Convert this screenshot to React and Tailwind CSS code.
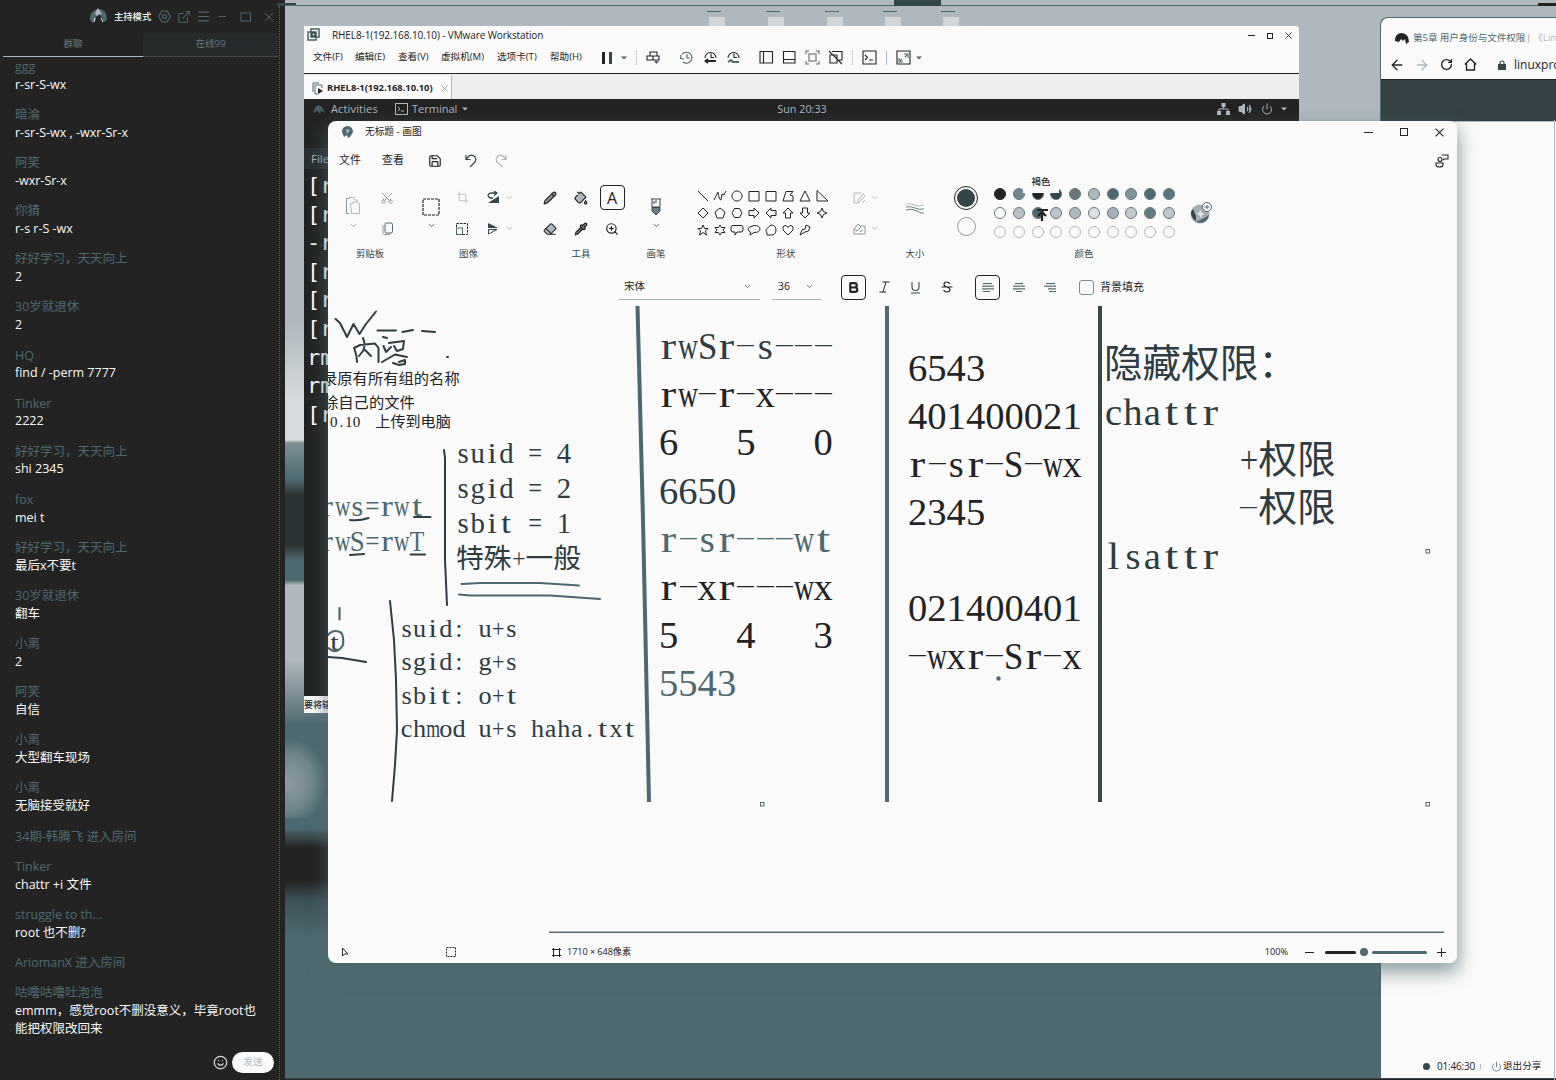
import React from "react";
import {
  ExternalLink, Menu, Minus, X, Smile, Save, Scissors,
  Crop, Pencil, PaintBucket, Eraser, Pipette, ZoomIn, ChevronDown, ArrowLeft, ArrowRight, RotateCw,
  Power, Volume2, Bold,
} from "lucide-react";

const UI = "font-['Open_Sans','Noto_Sans_CJK_SC',sans-serif]";

const chat = [
  ["ggg", "r-sr-S-wx"],
  ["暗淪", "r-sr-S-wx , -wxr-Sr-x"],
  ["阿笑", "-wxr-Sr-x"],
  ["你猜", "r-s r-S -wx"],
  ["好好学习，天天向上", "2"],
  ["30岁就退休", "2"],
  ["HQ", "find / -perm 7777"],
  ["Tinker", "2222"],
  ["好好学习，天天向上", "shi 2345"],
  ["fox", "mei t"],
  ["好好学习，天天向上", "最后x不要t"],
  ["30岁就退休", "翻车"],
  ["小离", "2"],
  ["阿笑", "自信"],
  ["小离", "大型翻车现场"],
  ["小离", "无脑接受就好"],
  ["34期-韩腾飞 进入房间", null],
  ["Tinker", "chattr +i 文件"],
  ["struggle to th...", "root 也不删?"],
  ["AriomanX 进入房间", null],
  ["咕噜咕噜吐泡泡", "emmm，感觉root不删没意义，毕竟root也能把权限改回来"],
];

function Sidebar() {
  return (
    <aside className={`relative flex h-full w-[285px] shrink-0 flex-col bg-[#232323] ${UI}`}>
      <div className="flex h-[33px] shrink-0 items-center pl-[89px] text-[#4d696f]">
        <svg className="shrink-0" width="19" height="17" viewBox="0 0 19 17">
          <path d="M1 12Q0 3 9 1Q18 1 18 12L15 14L13 10L11 7L8 8L6 12L4 15Z" fill="#4d696f" />
          <path d="M7 3L9 0L11 3L13 7L10 6L8 8L6 6Z" fill="#afb8be" />
          <path d="M5 14L6 10M14 14L12 10" stroke="#fafafa" strokeWidth="1" />
        </svg>
        <span className="ml-[6px] w-[38px] shrink-0 whitespace-nowrap text-[9.3px] font-medium text-[#fafafa]">主持模式</span>
        <svg className="ml-[6px] shrink-0" width="13" height="13" viewBox="0 0 13 13" fill="none" stroke="currentColor" strokeWidth="1.200">
          <path d="M4 1H9L12.3 6.5L9 12H4L.7 6.5Z" /><circle cx="6.5" cy="6.5" r="2" />
        </svg>
        <ExternalLink className="ml-[6px] shrink-0" size={14} strokeWidth={1.8} />
        <Menu className="ml-[5px] shrink-0" size={15} strokeWidth={1.7} />
        <Minus className="ml-[6px] shrink-0" size={11} strokeWidth={2} />
        <svg className="ml-[12px] shrink-0" width="12" height="10" viewBox="0 0 12 10" fill="none" stroke="currentColor"><rect x="1" y="1" width="9.5" height="8" /></svg>
        <X className="ml-[10px] shrink-0" size={14} strokeWidth={1.6} />
      </div>
      <div className="ml-[3px] flex h-[24px] w-[275px] shrink-0 text-[9.6px] text-[#62797f]">
        <div className="flex w-[140px] items-center justify-center border-b border-[#afb8be]">群聊</div>
        <div className="flex flex-1 items-center justify-center border-b border-dotted border-[#4d696f] bg-[#272a2b]">在线99</div>
      </div>
      <div className="ml-[15px] mt-px w-[245px] shrink-0 text-[12.5px] leading-[17.7px]">
        {chat.map(([name, text], i) => (
          <div key={i} className="mb-[12.7px] last:mb-0">
            <div className="whitespace-nowrap text-[#4d696f]">{name}</div>
            {text && <div className="text-[#fafafa]">{text}</div>}
          </div>
        ))}
      </div>
      <div className="mt-auto flex h-[35px] shrink-0 items-center justify-end pr-[11px]">
        <Smile size={15} strokeWidth={2} className="text-[#d5dadc]" />
        <div className="ml-[4px] flex h-[21px] w-[42px] items-center justify-center rounded-full bg-[#fafafa] text-[9.5px] text-[#afb8be]">发送</div>
      </div>
      <div className="absolute bottom-0 right-[5px] top-[6px] border-r border-dotted border-[#4d696f]" />
    </aside>
  );
}

const Caret = ({ c = "#232323" }) => (
  <svg width="6" height="4" viewBox="0 0 6 4"><path d="M0 .5H6L3 3.5Z" fill={c} /></svg>
);

function WinButtons({ size, gap }) {
  return (
    <div className="flex items-center text-[#232323]" style={{ gap }}>
      <div className="h-px bg-[#232323]" style={{ width: size }} />
      <div className="border border-[#232323]" style={{ width: size - 1, height: size - 1 }} />
      <svg width={size} height={size} viewBox="0 0 8 8" stroke="currentColor"><path d="M.5.5L7.5 7.5M7.5.5L.5 7.5" /></svg>
    </div>
  );
}

const VIcon = ({ children, className = "" }) => (
  <svg className={`shrink-0 ${className}`} width="15" height="15" viewBox="0 0 15 15" fill="none" stroke="#232323" strokeWidth="1.1">{children}</svg>
);

function VMware() {
  const lines = ["[r", "[r", "-r", "[r", "[r", "[r", "rm", "rm", "[r"];
  return (
    <section className={`absolute left-[304px] top-[26px] flex h-[687px] w-[995px] flex-col rounded-tr bg-[#fafafa] ${UI}`}>
      <div className="flex h-[19px] items-center pl-[3px] pr-[7px] text-[10px] text-[#232323]">
        <VIcon><rect x="1" y="4" width="8" height="8" stroke="#4d696f" strokeWidth="1.6" /><rect x="4" y="1" width="8" height="8" stroke="#4d696f" strokeWidth="1.6" /><rect x="5" y="5" width="3" height="3" /></VIcon>
        <span className="ml-[10px] w-[211px] whitespace-nowrap tracking-[-0.1px]">RHEL8-1(192.168.10.10) - VMware Workstation</span>
        <div className="ml-auto"><WinButtons size={7} gap={12} /></div>
      </div>
      <div className="flex h-[29px] items-center border-b border-[#232323] pb-[3px] pl-[9px] text-[9.6px] text-[#232323]">
        <div className="flex whitespace-nowrap">
          <span className="w-[42px]">文件(F)</span><span className="w-[43px]">编辑(E)</span><span className="w-[43px]">查看(V)</span>
          <span className="w-[56px]">虚拟机(M)</span><span className="w-[53px]">选项卡(T)</span><span className="w-[52px]">帮助(H)</span>
        </div>
        <div className="flex w-[10px] justify-between"><i className="h-[12px] w-[3px] bg-[#232323]" /><i className="h-[12px] w-[3px] bg-[#33464a]" /></div>
        <div className="ml-[9px]"><Caret c="#4d696f" /></div>
        <i className="ml-[9px] h-[14px] border-l border-dotted border-[#afb8be]" />
        <VIcon className="ml-[9px]"><path d="M4 2H11V6H4ZM1 6H7V10H1ZM7 6H13V10H7" /><path d="M8 11H13L10.500 14Z" fill="#4d696f" stroke="none" /></VIcon>
        <VIcon className="ml-[18px]"><path d="M3 4.500A5.500 5.500 0 1 1 4 12M2 5L1.500 8.500L5 9M8 4V8H11" stroke="#4d696f" /></VIcon>
        <VIcon className="ml-[9px]"><path d="M2 8A5.500 5.500 0 1 1 13 8M8 3.500V7.500H11" /><path d="M2 11H13M5 9L2.500 11L5 13" strokeWidth="1.800" /></VIcon>
        <VIcon className="ml-[8px]"><path d="M2 8A5.500 5.500 0 1 1 13 8M8 3.500V7.500H11" /><path d="M2 12L5 10L7 12H13" stroke="#4d696f" strokeWidth="2" /></VIcon>
        <VIcon className="ml-[18px]"><path d="M1 1.500H13.500V13H1ZM4.500 1.500V13" /></VIcon>
        <VIcon className="ml-[8px]"><path d="M1.500 1.500H13V13H1.500ZM1.500 9.500H13" /></VIcon>
        <VIcon className="ml-[8px]"><path d="M1 4V1H4M11 1H14V4M14 11V14H11M4 14H1V11" stroke="#4d696f" /><rect x="4" y="4" width="7" height="7" stroke="#8b979d" strokeWidth="1.600" /></VIcon>
        <VIcon className="ml-[8px]"><path d="M4 1.500H14V10H11M2 4V13H9V5H3M1 1L14 14" /></VIcon>
        <i className="ml-[9px] h-[14px] border-l border-dotted border-[#afb8be]" />
        <VIcon className="ml-[9px]"><path d="M1 1H14V14H1ZM3 5L5.500 7.500L3 10M7 10H11" /></VIcon>
        <i className="ml-[9px] h-[14px] border-l border-[#afb8be]" />
        <VIcon className="ml-[9px]"><path d="M1 1H14V14H1Z" /><path d="M3 8V12H7M8 4H12V8M4 11L6 9M11 5L9 7" stroke="#4d696f" /></VIcon>
        <div className="ml-[5px]"><Caret c="#4d696f" /></div>
      </div>
      <div className="flex h-[25px] bg-[#ebedee] pt-[2px]">
        <div className="flex w-[148px] items-center border-r border-[#afb8be] bg-[#fafafa] pl-[8px] pt-px text-[9.4px] font-bold text-[#232323]">
          <svg width="12" height="13" viewBox="0 0 12 13" fill="none" stroke="#4d696f"><path d="M1 10V1H7M3 12V3H10V6M3 12H6" /><path d="M6 6L11 9L6 12Z" fill="#232323" stroke="none" /></svg>
          <span className="ml-[3px] w-[106px] whitespace-nowrap">RHEL8-1(192.168.10.10)</span>
          <X className="ml-[6px] shrink-0" size={11} strokeWidth={1.800} color="#8b979d" />
        </div>
      </div>
      <div className="flex h-[597px] flex-col bg-[#232323] text-[#d5dadc]">
        <div className="grid h-[20px] grid-cols-3 items-center pl-[9px] pr-[12px] text-[11px]">
          <div className="flex items-center">
            <svg width="12" height="9" viewBox="0 0 12 9" fill="#4d696f"><path d="M3 1L6 0L9 2L12 8L8 6L7 9L4 6L0 8Z" opacity=".8" /></svg>
            <span className="ml-[6px] w-[50px] tracking-[0.15px] text-[#afb8be]">Activities</span>
            <svg className="ml-[14px]" width="13" height="12" viewBox="0 0 13 12" fill="none" stroke="#afb8be"><rect x=".5" y=".5" width="12" height="11" /><path d="M3 4L5 6L3 8M6 8H9" /></svg>
            <span className="ml-[4px] w-[47px] text-[#afb8be]">Terminal</span>
            <span className="ml-[3px]"><Caret c="#afb8be" /></span>
          </div>
          <div className="pl-[4px] text-center text-[10.8px] text-[#afb8be]">Sun 20:33</div>
          <div className="flex items-center justify-end text-[#afb8be]">
            <svg width="13" height="12" viewBox="0 0 13 12" fill="#afb8be"><path d="M4.500 0H8.500V4H4.500ZM0 8H4V12H0ZM9 8H13V12H9Z" /><path d="M6.500 4V6M2 8V6H11V8" fill="none" stroke="#afb8be" /></svg>
            <Volume2 className="ml-[8px]" size={14} fill="#afb8be" /><Power className="ml-[9px]" size={12} /><span className="ml-[8px]"><Caret c="#afb8be" /></span>
          </div>
        </div>
        <div className="mt-[29px] flex h-[21px] items-center bg-[#2b3032] pl-[7px] text-[11.5px] text-[#afb8be]">File</div>
        <div className="mt-[3px] whitespace-pre pl-[3px] font-['DejaVu_Sans_Mono',monospace] text-[22px] leading-[28.6px] text-[#fafafa]">
          {lines.map((l, i) => <div key={i}>{l}</div>)}
        </div>
      </div>
      <div className="flex flex-1 items-center overflow-hidden whitespace-nowrap text-[9px] font-medium text-[#232323]">要将输入定向到该虚拟机</div>
    </section>
  );
}

function Browser() {
  return (
    <section className={`absolute left-[1380px] top-[17px] flex h-[1061px] w-[176px] flex-col overflow-hidden rounded-tl-lg border-l border-t border-[#4d696f] bg-[#fafafa] ${UI}`}>
      <div className="flex h-[34px] items-center whitespace-nowrap pl-[14px] pt-[7px] text-[9.6px] text-[#4d696f]">
        <svg className="shrink-0" width="14" height="11" viewBox="0 0 14 11"><path d="M0 8Q0 0 7 0Q14 1 14 9L11 11L10 6L8 8L6 6L4 9Z" fill="#232323" /></svg>
        <span className="ml-[4px] w-[111px] shrink-0 tracking-[-0.1px]">第5章 用户身份与文件权限</span><span className="ml-[2px] text-[#8b979d]">|</span>
        <span className="ml-[2px] text-[#afb8be]">《Linux就该这么学》</span>
      </div>
      <div className="flex h-[27px] items-center pb-[2px] pl-[8px] text-[#232323]">
        <ArrowLeft className="shrink-0" size={16} strokeWidth={2} /><ArrowRight className="ml-[9px] shrink-0 text-[#afb8be]" size={16} strokeWidth={2} />
        <RotateCw className="ml-[10px] shrink-0" size={13} strokeWidth={2.5} />
        <svg className="ml-[11px] shrink-0" width="13" height="13" viewBox="0 0 13 13" fill="none" stroke="#232323" strokeWidth="1.4"><path d="M.8 6.500L6.500 1L12.200 6.500M2.500 5.500V12H10.500V5.500" /></svg>
        <svg className="ml-[21px] shrink-0" width="8" height="10" viewBox="0 0 8 10"><rect y="4" width="8" height="6" fill="#33464a" /><path d="M2 4V2.500Q2 1 4 1T6 2.500V4" fill="none" stroke="#33464a" strokeWidth="1.200" /></svg>
        <span className="ml-[8px] text-[12px]">linuxprobe</span>
      </div>
      <div className="h-[42px] shrink-0 border-t border-[#232323] bg-[#354346]" />
      <div className="flex-1 border-t border-[#afb8be]" />
      <div className="flex h-[23px] items-center whitespace-nowrap pl-[42px] text-[10px] text-[#232323]">
        <i className="h-[7px] w-[7px] rounded-full bg-[#33464a]" /><span className="ml-[7px] w-[39px] tracking-[-0.2px]">01:46:30</span>
        <i className="ml-[4px] h-[5px] w-px bg-[#afb8be]" /><Power className="ml-[10px]" size={11} strokeWidth={1.7} color="#4d696f" />
        <span className="ml-px text-[9.6px]">退出分享</span>
      </div>
    </section>
  );
}

const shape = {
  w: "scaleX(.72)", m: "scaleX(.68)", "-": "translateY(-.06em) scale(1.7,.5)", "+": "scaleX(.85)", "=": "scaleX(.85)",
  S: "scaleX(.9)", T: "scaleX(.8)", r: "scaleX(1.2)", t: "scaleX(1.25)", i: "scaleX(1.15)", l: "scaleX(1.1)",
};

/* Text on a half-width / full-width character grid, like a Song typeface. */
function Grid({ text, className = "" }) {
  return (
    <div className={`whitespace-pre font-['Liberation_Serif','Noto_Sans_CJK_SC',serif] ${className}`}>
      {[...text].map((ch, i) =>
        /[\u2e80-\uffff]/.test(ch) ? (
          <span key={i} className="inline-block w-[1em] text-center">{ch}</span>
        ) : (
          <span key={i} className="inline-flex w-[0.5em] justify-center">
            <span className="inline-block" style={shape[ch] ? { transform: shape[ch] } : undefined}>{ch}</span>
          </span>
        )
      )}
    </div>
  );
}

function Block({ lines, className }) {
  return <div className={`absolute ${className}`}>{lines.map(([t, c], i) => <Grid key={i} text={t || " "} className={c} />)}</div>;
}

const K = "text-[#232323]";
const M = "text-[#2e3d41]";
const T = "text-[#4d696f]";

function Canvas() {
  return (
    <div className="relative h-[625px] overflow-hidden">
      <Block className="left-[331px] top-[16px] text-[38.600px] leading-[48.200px]" lines={[
        ["rwSr-s---", M], ["rw-r-x---", K], ["6   5   0", K], ["6650", M], ["r-sr---wt", T], ["r-xr---wx", K], ["5   4   3", K], ["5543", T]]} />
      <Block className="left-[580px] top-[38px] text-[38.600px] leading-[48px]" lines={[
        ["6543", K], ["401400021", K], ["r-sr-S-wx", K], ["2345", K], ["", K], ["021400401", K], ["-wxr-Sr-x", K]]} />
      <Block className="left-[776px] top-[34px] text-[38.600px] leading-[48px]" lines={[
        ["隐藏权限：", M], ["chattr", M], ["       +权限", M], ["       -权限", M], ["lsattr", M]]} />
      <Block className="left-[128px] top-[130px] text-[28.800px] leading-[35px]" lines={[["suid = 4", M], ["sgid = 2", M], ["sbit = 1", M]]} />
      <Block className="left-[128px] top-[235px] text-[27.800px] leading-[35px]" lines={[["特殊+一般", M]]} />
      <Block className="left-[72px] top-[306px] text-[26.200px] leading-[33.400px]" lines={[["suid: u+s", M], ["sgid: g+s", M], ["sbit: o+t", M], ["chmod u+s haha.txt", M]]} />
      <Block className="left-[-8px] top-[183px] text-[29.800px] leading-[34.500px]" lines={[["rws=rwt", T], ["rwS=rwT", T]]} />
      <Block className="left-[-6px] top-[61px] text-[15.300px] leading-[24px]" lines={[["录原有所有组的名称", K]]} />
      <Block className="left-[-5px] top-[85px] text-[15.300px] leading-[24px]" lines={[["除自己的文件", K]]} />
      <Block className="left-[2px] top-[104px] text-[15.100px] leading-[24px]" lines={[["0.10  上传到电脑", K]]} />
      <Block className="left-[0px] top-[322px] text-[24px] leading-[28px]" lines={[["t", M]]} />
      <svg className="absolute left-0 top-0" width="1129" height="625" viewBox="328 306 1129 625" fill="none">
        <g stroke="#2e3d41" strokeWidth="2" strokeLinecap="round" strokeLinejoin="round">
          <path d="M335.500 319L340 323L347 337L353.500 324L359.500 334L366 324L370 319L376 311.500M377.500 330.500H396M402.500 332L413 330M422 331L435 332" />
          <path d="M354.500 349Q357 356 357 362M354 348L360 345L375 343.500L378.500 348L378.500 362M363 338Q366 345 363 351L359 356M365 350L371 356" />
          <path d="M383 337L387 338M383.500 346L386 352L391 347M389 343L404 341L403 349L397 351L394 346M382 362L395 354.500L407 357M393 363L399 365L405 364L405 360L399 362" />
          <path d="M447 357H448M350 520Q360 521 368.500 518M414 517H430.500M350 555L364 554M410.500 554.500H425M328 657L342 658L366 662" />
          <path d="M444 450L445 458L445 560L447 605M390 601L394 640L396 680L397 730L395 765L392 801" />
        </g>
        <g stroke="#4d696f" strokeWidth="2.200" strokeLinecap="round">
          <path d="M461.500 584L480 583H540L579 585.500M459 594.500L470 595.500H550L600 599M339.500 608V619.500" />
          <path d="M328 635Q333 629 340 632Q344 634 343 645Q339 652 333 651L328 648" />
        </g>
        <path d="M637.500 306L643 520L649 802M887 306V802" stroke="#4d696f" strokeWidth="4" />
        <path d="M1100 306V802" stroke="#3a464a" strokeWidth="4" />
        <circle cx="998.500" cy="678.500" r="2.200" fill="#4d696f" />
        <g stroke="#4d696f" strokeWidth="1"><rect x="760.500" y="802.500" width="3.500" height="3.500" /><rect x="1426" y="802.500" width="3.500" height="3.500" /><rect x="1426" y="549.500" width="3.500" height="3.500" /></g>
      </svg>
    </div>
  );
}

const shapePaths = [
  "M2 2L12 12", "M1 11Q4 5 5 3Q6 11 8 11L9 5L11 6L13 2", "M7 2A5 5 0 1 1 6.990 2", "M2 2.500H12V12H2Z", "M2 2.500H12V12H2Z", "M5 2.500H12L9 6L12 7V12H2Z", "M7 2L12 12H2Z", "M2 1.500V12H13Z",
  "M7 2L12 7L7 12L2 7Z", "M7 2L12 6L10 12H4L2 6Z", "M4.500 2.500H9.500L12 7L9.500 11.500H4.500L2 7Z", "M2 4.500H7V2L12 7L7 12V9.500H2Z", "M12 4.500H7V2L2 7L7 12V9.500H12Z", "M4.500 12V7H2L7 2L12 7H9.500V12Z", "M4.500 2V7H2L7 12L12 7H9.500V2Z", "M7 2L8.500 5.500L12 7L8.500 8.500L7 12L5.500 8.500L2 7L5.500 5.500Z",
  "M7 2L8.500 5.500H12L9.500 8L10.500 12L7 9.500L3.500 12L4.500 8L2 5.500H5.500Z", "M7 2L8.500 4.500H12L10 7L12 9.500H8.500L7 12L5.500 9.500H2L4 7L2 4.500H5.500Z", "M3 2.500H11Q13 2.500 13 4.500V7Q13 9 11 9H7L5 12V9H3Q1 9 1 7V4.500Q1 2.500 3 2.500Z", "M7 2.500Q13 2.500 13 6T7 9.500L3 12L3.500 9Q1 8 1 6T7 2.500Z", "M7 2Q12 2 12 7T7 12L3 12L3 10Q2 8 2 7T7 2Z", "M7 12L2 7Q1 3 4 2.500Q6 2.500 7 4.500Q8 2.500 10 2.500Q13 3 12 7Z", "M8 2L12 4L10.500 8L7 9L2 12L4 7L7 6Z",
];

const Chev = ({ c = "#8b979d" }) => <ChevronDown size={9} strokeWidth={2.4} color={c} className="shrink-0" />;

function Group({ width, label, children }) {
  return (
    <div className="flex shrink-0 flex-col" style={{ width }}>
      <div className="flex h-[62px]">{children}</div>
      <div className="flex h-[20px] items-center justify-center whitespace-nowrap text-[9.4px] text-[#33464a]">{label}</div>
    </div>
  );
}
const Cell = ({ className = "", children }) => <div className={`flex h-[31px] items-center justify-center ${className}`}>{children}</div>;

const palette = [
  "bg-[#232323]", "bg-[#71868c]", "bg-[#232323]", "bg-[#33464a]", "bg-[#697579]", "bg-[#afb8be]", "bg-[#4d696f]", "bg-[#81949a]", "bg-[#4d696f]", "bg-[#5a757b]",
  "bg-[#fafafa]", "bg-[#b8c0c5]", "bg-[#4d696f]", "bg-[#bdc5c9]", "bg-[#afb8be]", "bg-[#dce0e3]", "bg-[#a5b0b6]", "bg-[#c3cacd]", "bg-[#62797f]", "bg-[#bcc6c9]",
  ...Array(10).fill("bg-[#fafafa]"),
];

function Ribbon() {
  return (
    <div className="flex h-[91px] pt-[5px] text-[#232323]">
      <Group width={84} label="剪贴板">
        <div className="ml-[8px] flex w-[34px] flex-col items-center pt-[15px]">
          <svg width="16" height="18" viewBox="0 0 16 18" fill="none" stroke="#afb8be"><path d="M4 1.500H1.500V16.500H4" stroke="#8b979d" /><path d="M4 2V.500H9V3M10 3H12V5M5.500 6.500H8V5H13L14.500 7V16.500H6.500Z" /></svg>
          <div className="mt-[6px]"><Chev /></div>
        </div>
        <div className="w-[34px]">
          <Cell><Scissors size={14} strokeWidth={1.6} color="#8b979d" className="-rotate-90" /></Cell>
          <Cell><svg width="11" height="13" viewBox="0 0 11 13" fill="none" stroke="#4d696f"><rect x="3" y="1" width="7.500" height="10" rx="1.500" /><path d="M1 3V11Q1 12.500 3 12.500H8" stroke="#8b979d" /></svg></Cell>
        </div>
      </Group>
      <Group width={113} label="图像">
        <div className="ml-[7px] flex w-[24px] flex-col items-center pt-[16px]">
          <svg width="18" height="18" viewBox="0 0 18 18" fill="none"><rect x="1" y="1" width="16" height="16" stroke="#232323" strokeWidth="1.200" strokeDasharray="3 1" /></svg>
          <div className="mt-[5px]"><Chev c="#4d696f" /></div>
        </div>
        <div className="w-[38px]">
          <Cell><Crop size={13} strokeWidth={1.6} color="#afb8be" /></Cell>
          <Cell><svg width="12" height="12" viewBox="0 0 12 12" fill="none" stroke="#232323"><path d="M.5 4V.5H11.500V11.500H7" strokeDasharray="2.500 1" /><rect x=".5" y="5" width="6" height="6.500" stroke="#4d696f" /></svg></Cell>
        </div>
        <div className="w-[24px]">
          <Cell><svg width="13" height="13" viewBox="0 0 13 13"><path d="M12 5V12H1Z" fill="#33464a" /><path d="M1 5Q1 2 5 2H9M7 0L10 2L7 4.500M1 5L3 7H6" fill="none" stroke="#33464a" strokeWidth="1.300" /></svg></Cell>
          <Cell><svg width="12" height="13" viewBox="0 0 12 13"><path d="M1 1L11 6H1Z" fill="#33464a" /><path d="M1.500 12L10 7.500H1.500Z" fill="none" stroke="#33464a" /></svg></Cell>
        </div>
        <div className="w-[8px]"><Cell><Chev c="#afb8be" /></Cell><Cell><Chev c="#afb8be" /></Cell></div>
      </Group>
      <Group width={112} label="工具">
        <div className="mx-auto grid w-[93px] grid-cols-3">
          <Cell><Pencil size={14} strokeWidth={2} fill="#8b979d" /></Cell>
          <Cell><PaintBucket size={14} strokeWidth={2} fill="#afb8be" /></Cell>
          <Cell><div className="flex h-[25px] w-[25px] items-center justify-center rounded border border-[#232323] text-[16px]">A</div></Cell>
          <Cell><Eraser size={14} strokeWidth={1.800} fill="#afb8be" /></Cell>
          <Cell><Pipette size={14} strokeWidth={2} fill="#6b7f84" /></Cell>
          <Cell><ZoomIn size={14} strokeWidth={2} /></Cell>
        </div>
      </Group>
      <Group width={38} label="画笔">
        <div className="flex w-full flex-col items-center pt-[16px]">
          <svg width="12" height="18" viewBox="0 0 12 18" fill="none" stroke="#33464a"><path d="M1 1H11M2 1V9H10V1M4 3V6M6 2V5" /><path d="M2 9.500H10V13Q8 15 6 17Q4 15 2 13Z" fill="#6b7f84" /></svg>
          <div className="mt-[5px]"><Chev c="#4d696f" /></div>
        </div>
      </Group>
      <div className="w-[15px]" />
      <Group width={192} label="形状">
        <div className="ml-[4px] mt-[6px] grid h-[50px] w-[136px] grid-cols-8">
          {shapePaths.map((d, i) => <svg key={i} className="m-auto" width="14" height="14" viewBox="0 0 14 14" fill="none" stroke="#232323"><path d={d} /></svg>)}
        </div>
        <div className="ml-[21px] w-[16px] shrink-0">
          <Cell><svg width="13" height="12" viewBox="0 0 13 12" fill="none" stroke="#afb8be"><path d="M8 1H1V11H5L12 4L10 2L5 8V11M9 11L12 8" /></svg></Cell>
          <Cell><svg width="13" height="12" viewBox="0 0 13 12" fill="none" stroke="#8b979d"><path d="M8 3H12V11H1V6L5 1L8 4L4 8L1 6M7 9L10 7" /></svg></Cell>
        </div>
        <div className="w-[14px]"><Cell><Chev c="#afb8be" /></Cell><Cell><Chev c="#afb8be" /></Cell></div>
      </Group>
      <Group width={66} label="大小">
        <div className="flex w-full justify-center pt-[19px]">
          <svg width="18" height="14" viewBox="0 0 18 14" fill="none" stroke="#6b7f84"><path d="M0 3Q5 2 9 4T18 4" stroke="#afb8be" /><path d="M0 6Q5 5 9 7T18 8M0 9Q6 7 11 10T18 12" /></svg>
        </div>
      </Group>
      <Group width={272} label="颜色">
        <div className="ml-[6px] flex w-[24px] shrink-0 flex-col items-center pt-[4px]">
          <div className="flex h-[24px] w-[24px] items-center justify-center rounded-full border border-[#232323]"><i className="h-[18px] w-[18px] rounded-full bg-[#33464a]" /></div>
          <div className="mt-[7px] h-[19px] w-[19px] rounded-full border border-[#8b979d]" />
        </div>
        <div className="relative ml-[13px] mt-[3px] grid h-[56px] w-[187px] shrink-0 grid-cols-10">
          {palette.map((c, i) => <i key={i} className={`m-auto h-[12px] w-[12px] rounded-full border ${i === 0 ? "border-[#232323]" : i < 20 ? "border-[#62797f]" : "border-[#afb8be]"} ${c}`} />)}
          <div className="absolute left-[32px] top-[-13px] flex h-[21px] w-[36px] items-center justify-center bg-[#fafafa] text-[9.400px] font-medium">褐色</div>
          <svg className="absolute left-[44px] top-[24px]" width="14" height="13" viewBox="0 0 14 13"><path d="M2 1H13M7 12V4M3 7L7 3L11 7" fill="none" stroke="#232323" strokeWidth="2.200" /></svg>
        </div>
        <svg className="ml-[12px] mt-[18px] shrink-0" width="24" height="24" viewBox="0 0 24 24">
          <circle cx="10" cy="14" r="9.500" fill="#a3aeb4" /><path d="M1 12Q1 18 6 21L6 16L3 9Z" fill="#33464a" /><path d="M6 22Q17 25 19 15L14 18Z" fill="#4d696f" />
          <path d="M10 10L12 13L15 14L12 15L11 18L9 15L6 14L9 13Z" fill="#e5e8ea" /><circle cx="17" cy="7" r="4.500" fill="#fafafa" stroke="#4d696f" /><path d="M14.500 7H19.500M17 5V9" stroke="#4d696f" />
        </svg>
      </Group>
    </div>
  );
}

const Align = ({ w }) => (
  <svg width="12" height="9" viewBox="0 0 12 9" stroke="#4d696f" strokeWidth="1.200">{w.map(([a, b], i) => <path key={i} d={`M${a} ${0.5 + i * 2.7}H${b}`} />)}</svg>
);

function FormatBar() {
  return (
    <div className="flex h-[38px] items-center pl-[290px] text-[10.500px] text-[#232323]">
      <div className="flex h-[25px] w-[142px] items-center justify-between border-b border-[#afb8be] pl-[6px] pr-[8px]">宋体<Chev c="#4d696f" /></div>
      <div className="ml-[12px] flex h-[25px] w-[50px] items-center justify-between border-b border-[#afb8be] pl-[6px] pr-[8px]">36<Chev c="#4d696f" /></div>
      <div className="ml-[19px] flex h-[25px] w-[25px] items-center justify-center rounded border border-[#232323]"><Bold size={13} strokeWidth={4} /></div>
      <svg className="ml-[13px]" width="11" height="12" viewBox="0 0 11 12" fill="none" stroke="#232323"><path d="M3.500 1H10.500M.5 11H7M7 1L4 11" /></svg>
      <svg className="ml-[21px]" width="9" height="13" viewBox="0 0 9 13" fill="none" stroke="#33464a" strokeWidth="1.100"><path d="M1 1V6Q1 9.500 4.500 9.500T8 6V1M0 12H9" /></svg>
      <svg className="ml-[21px]" width="12" height="12" viewBox="0 0 12 12" fill="none" stroke="#232323" strokeWidth="1.100"><path d="M9 3Q8 1 5.500 1T3 3.500Q3 5 6 6T9 9Q8.500 11 6 11T2.500 9M.5 6H11.500" /></svg>
      <div className="ml-[22px] flex h-[25px] w-[25px] items-center justify-center rounded border border-[#232323]"><Align w={[[1, 10], [0, 12], [0, 12], [1, 8]]} /></div>
      <div className="ml-[13px]"><Align w={[[2, 10], [0, 12], [0, 12], [3, 9]]} /></div>
      <div className="ml-[19px]"><Align w={[[2, 11], [0, 12], [4, 12], [5, 12]]} /></div>
      <div className="ml-[23px] h-[15px] w-[15px] rounded-[3px] border border-[#7b8d92]" />
      <span className="ml-[6px] whitespace-nowrap text-[11px]">背景填充</span>
    </div>
  );
}

function Paint() {
  return (
    <section className={`absolute left-[328px] top-[121px] flex h-[842px] w-[1129px] flex-col overflow-hidden rounded-lg bg-[#fafafa] ${UI}`}>
      <div className="flex h-[22px] items-center pl-[13px] pr-[13px] text-[9.700px] text-[#232323]">
        <svg width="12" height="12" viewBox="0 0 12 12"><path d="M1 6Q1 0 7 0Q12 1 12 6L9 11L7 12L6 9L3 11Z" fill="#4d696f" /><path d="M5 3L9 4L6 8Z" fill="#afb8be" /></svg>
        <span className="ml-[12px] whitespace-nowrap">无标题 - 画图</span>
        <div className="ml-auto"><WinButtons size={9} gap={27} /></div>
      </div>
      <div className="flex h-[34px] items-center pl-[11px] pr-[8px] pt-px text-[10.900px] text-[#232323]">
        <span className="w-[43px]">文件</span><span className="w-[22px]">查看</span>
        <Save className="ml-[24px]" size={14} strokeWidth={2} />
        <svg className="ml-[23px]" width="12" height="14" viewBox="0 0 12 14" fill="none" stroke="#33464a" strokeWidth="1.200"><path d="M1 1V5.500H5.500M1 5.500L4 2Q7 0 10 3Q12 6 9 9L5 13" /></svg>
        <svg className="ml-[18px]" width="12" height="14" viewBox="0 0 12 14" fill="none" stroke="#afb8be" strokeWidth="1.200"><path d="M11 1V5.500H6.500M11 5.500L8 2Q5 0 2 3Q0 6 3 9L8 13" /></svg>
        <svg className="ml-auto" width="14" height="14" viewBox="0 0 14 14" fill="none" stroke="#232323" strokeWidth="1.100"><circle cx="5" cy="5.500" r="2" /><path d="M1 9H8V11Q8 13 4.500 13T1 11ZM7 1H13V5H9L8 6" /></svg>
      </div>
      <Ribbon />
      <FormatBar />
      <Canvas />
      <div className="ml-[221px] h-[2px] w-[895px] shrink-0 border-t border-[#afb8be] bg-[#4d696f]" />
      <div className="flex flex-1 items-center pl-[13px] pr-[11px] pt-[8px] text-[9.200px] text-[#232323]">
        <svg width="9" height="10" viewBox="0 0 9 10" fill="none" stroke="#232323"><path d="M1.500 1V9L3.500 7H7Z" /></svg>
        <svg className="ml-[96px]" width="10" height="10" viewBox="0 0 10 10"><rect x=".5" y=".5" width="9" height="9" fill="none" stroke="#232323" strokeDasharray="2 1" /></svg>
        <svg className="ml-[96px]" width="9" height="9" viewBox="0 0 9 9" fill="none" stroke="#232323"><path d="M1.500 0V9M7.500 0V9M0 1.500H9M0 7.500H9" /></svg>
        <span className="ml-[6px] w-[64px] whitespace-nowrap tracking-[-0.1px]">1710 × 648像素</span>
        <span className="ml-auto">100%</span>
        <i className="ml-[17px] h-px w-[9px] bg-[#232323]" />
        <div className="ml-[11px] flex w-[102px] items-center"><i className="h-[3px] w-[31px] rounded bg-[#232323]" /><i className="mx-[4px] h-[8px] w-[8px] rounded-full bg-[#4d696f]" /><i className="h-[3px] flex-1 rounded bg-[#4d696f]" /></div>
        <svg className="ml-[10px]" width="9" height="9" viewBox="0 0 9 9" stroke="#232323"><path d="M4.500 0V9M0 4.500H9" /></svg>
      </div>
    </section>
  );
}

export default function App() {
  const folders = ["left-[707px]", "left-[766px]", "left-[825px]", "left-[883px]", "left-[941px]"];
  return (
    <main className="relative flex h-[1080px] w-[1556px] overflow-hidden bg-[#232323]">
      <Sidebar />
      <div className="h-full flex-1 bg-[linear-gradient(180deg,#afb8be_0px,#afb8be_320px,#d5dadc_400px,#d5dadc_440px,#7c9095_443px,#4d696f_480px,#2b3234_495px,#2b3234_545px,#4d696f_560px,#4d696f_580px,#afb8be_585px,#afb8be_660px,#62797f_712px,#4d696f_725px,#4d696f_828px,#232323_848px,#232323_880px,#3d5156_900px,#4d696f_937px,#4d696f_1078px,#232323_1079px)]" />
      <div className="absolute left-[285px] top-[738px] h-[80px] w-[43px] bg-[radial-gradient(ellipse_at_10%_55%,#8b9ba1,#6f858b_45%,#4d696f_70%)]" />
      <div className="absolute left-[277px] top-[3px] h-[3px] w-[19px] bg-[#33464a]" />
      <div className="absolute left-[285px] right-[14px] top-[5px] h-px bg-[#4d696f]" />
      <div className="absolute left-[894px] top-0 h-[6px] w-[47px] bg-[#33464a]" />
      <div className="absolute right-0 top-[3px] h-[3px] w-[18px] bg-[#232323]" />
      {folders.map((f) => (
        <div key={f} className={`absolute top-[11px] h-[15px] w-[20px] ${f}`}>
          <div className="h-px w-[14px] bg-[#4d696f]" />
          <div className="ml-[2px] mt-[5px] h-[9px] w-[16px] bg-[#d0d6d9]" />
        </div>
      ))}
      <VMware />
      <Browser />
      <div className="absolute left-[328px] top-[121px] h-[842px] w-[1129px] rounded-lg shadow-[0_8px_18px_2px_rgba(77,105,111,0.6)]" />
      <Paint />
      <div className="absolute bottom-0 right-[1px] top-[120px] w-px bg-[#afb8be]" />
    </main>
  );
}
